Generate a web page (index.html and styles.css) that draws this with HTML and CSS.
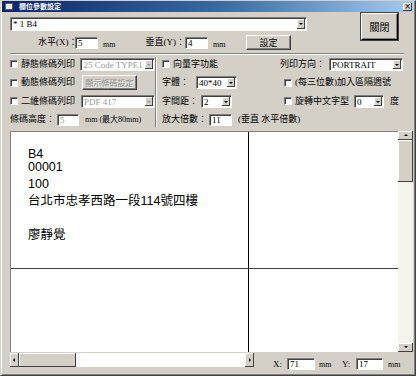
FILE: index.html
```html
<!DOCTYPE html>
<html lang="zh-Hant">
<head>
  <meta charset="UTF-8">
  <link rel="stylesheet" href="styles.css">
  <title>欄位參數設定</title>
</head>
<body>
  <div class="window">
    <!-- Title bar -->
    <div class="titlebar">
      <span class="title-icon"></span>
      <span class="title-text">欄位參數設定</span>
      <span class="title-close">×</span>
    </div>

    <!-- Field select + position -->
    <div class="top">
      <div class="top-left">
        <div class="combo combo-field"><span class="combo-text">* 1 B4</span><span class="combo-btn"></span></div>
        <div class="pos-row">
          <span class="lbl lbl-x">水平(X)：</span>
          <span class="field w23">5</span>
          <span class="unit">mm</span>
          <span class="lbl lbl-y">垂直(Y)：</span>
          <span class="field w23">4</span>
          <span class="unit">mm</span>
          <span class="btn btn-set">設定</span>
        </div>
      </div>
      <div class="btn btn-close">關閉</div>
    </div>

    <div class="sep"></div>

    <!-- Options -->
    <div class="options">
      <div class="opt-left">
        <div class="row">
          <span class="check-label"><span class="checkbox"></span>靜態條碼列印</span>
          <span class="combo combo-bar disabled"><span class="combo-text">25 Code TYPE1</span><span class="combo-btn"></span></span>
        </div>
        <div class="row">
          <span class="check-label"><span class="checkbox"></span>動態條碼列印</span>
          <span class="btn btn-bar disabled">顯示條碼設定</span>
        </div>
        <div class="row">
          <span class="check-label"><span class="checkbox"></span>二維條碼列印</span>
          <span class="combo combo-bar2 disabled"><span class="combo-text">PDF 417</span><span class="combo-btn"></span></span>
        </div>
        <div class="row">
          <span class="lbl lbl-height">條碼高度：</span>
          <span class="field w22 disabled">5</span>
          <span class="note">mm (最大80mm)</span>
        </div>
      </div>

      <div class="vsep"></div>

      <div class="opt-right">
        <div class="row">
          <span class="col-a"><span class="check-label"><span class="checkbox"></span>向量字功能</span></span>
          <span class="lbl lbl-dir">列印方向：</span>
          <span class="combo combo-dir"><span class="combo-text">PORTRAIT</span><span class="combo-btn"></span></span>
        </div>
        <div class="row">
          <span class="col-a">
            <span class="lbl lbl-font">字體：</span>
            <span class="combo combo-font"><span class="combo-text">40*40</span><span class="combo-btn"></span></span>
          </span>
          <span class="check-label col-b"><span class="checkbox"></span>(每三位數)加入區隔週號</span>
        </div>
        <div class="row">
          <span class="col-a">
            <span class="lbl lbl-space">字間距：</span>
            <span class="combo combo-space"><span class="combo-text">2</span><span class="combo-btn"></span></span>
          </span>
          <span class="check-label col-b lbl-rot"><span class="checkbox"></span>旋轉中文字型</span>
          <span class="combo combo-rot"><span class="combo-text">0</span><span class="combo-btn"></span></span>
          <span class="deg">度</span>
        </div>
        <div class="row">
          <span class="lbl lbl-zoom">放大倍數：</span>
          <span class="field w23">11</span>
          <span class="note">(垂直 水平倍數)</span>
        </div>
      </div>
    </div>

    <!-- Preview -->
    <div class="preview">
      <div class="paper-wrap">
        <div class="paper">
          <div class="cell cell-a">
            <div class="line line-first">B4</div>
            <div class="line">00001</div>
            <div class="line">100</div>
            <div class="line">台北市忠孝西路一段114號四樓</div>
            <div class="line">&nbsp;</div>
            <div class="line">廖靜覺</div>
          </div>
          <div class="cell cell-b"></div>
          <div class="cell cell-c"></div>
          <div class="cell cell-d"></div>
        </div>
        <div class="vscroll">
          <span class="sb-btn sb-up"></span>
          <span class="sb-thumb-v"></span>
          <span class="sb-track"></span>
          <span class="sb-btn sb-down"></span>
        </div>
      </div>
      <div class="bottom">
        <div class="hscroll">
          <span class="sb-btn sb-left"></span>
          <span class="sb-thumb-h"></span>
          <span class="sb-track"></span>
          <span class="sb-btn sb-right"></span>
        </div>
        <div class="coords">
          <span class="lbl lbl-cx">X:</span>
          <span class="field w28">71</span>
          <span class="unit unit-cx">mm</span>
          <span class="lbl lbl-cy">Y:</span>
          <span class="field w27">17</span>
          <span class="unit unit-cy">mm</span>
        </div>
      </div>
    </div>
  </div>
</body>
</html>
```

FILE: styles.css
```css
body {
  margin: 0;
  padding: 0;
  background: #d4d0c8;
  font-family: "Liberation Serif", "Noto Sans CJK TC", serif;
  font-size: 9px;
  color: #000;
}

.window {
  width: 416px;
  height: 376px;
  box-sizing: border-box;
  border: 1px solid;
  border-color: #d4d0c8 #404040 #404040 #d4d0c8;
  box-shadow: inset 1px 0 #fff, inset -1px -1px #808080;
  padding: 0 2px 2px 1px;
  background: #d4d0c8;
  overflow: hidden;
}

/* Title bar */
.titlebar {
  height: 11px;
  display: flex;
  align-items: center;
  background: linear-gradient(to right, #0a246a, #3a6ea5 55%, #a6caf0);
  color: #fff;
}

.title-icon {
  width: 6px;
  height: 5px;
  margin-left: 3px;
  background: #e8e8e8;
  border: 1px solid #606060;
}

.title-text {
  margin-left: 6px;
  font-family: "Noto Sans CJK TC", sans-serif;
  font-size: 7px;
  font-weight: bold;
  line-height: 11px;
}

.title-close {
  margin-left: auto;
  margin-right: 1px;
  width: 9px;
  height: 8px;
  background: #d4d0c8;
  color: #000;
  font-family: "DejaVu Sans", sans-serif;
  font-size: 8px;
  line-height: 8px;
  text-align: center;
  box-shadow: inset -1px -1px #404040, inset 1px 1px #fff;
}

/* Common controls */
.lbl, .unit, .note, .deg {
  white-space: nowrap;
  line-height: 13px;
}

.field {
  height: 12px;
  box-sizing: border-box;
  background: #fff;
  border: 1px solid;
  border-color: #808080 #fff #fff #808080;
  box-shadow: inset 1px 1px #404040;
  padding-left: 2px;
  line-height: 10px;
  font-size: 9px;
}

.field.disabled {
  color: #9a9a9a;
}

.w22 { width: 22px; }
.w23 { width: 23px; }
.w27 { width: 27px; }
.w28 { width: 28px; }

.combo {
  display: flex;
  height: 13px;
  box-sizing: border-box;
  background: #fff;
  border: 1px solid;
  border-color: #808080 #fff #fff #808080;
  box-shadow: inset 1px 1px #404040;
  padding: 1px 1px 1px 2px;
}

.combo-text {
  flex: 1;
  line-height: 10px;
  white-space: nowrap;
  overflow: hidden;
}

.combo-btn {
  width: 8px;
  background: #d4d0c8;
  box-shadow: inset -1px -1px #404040, inset 1px 1px #fff;
  position: relative;
}

.combo-btn::after {
  content: "";
  position: absolute;
  left: 2px;
  top: 4px;
  border-style: solid;
  border-width: 2px 2px 0 2px;
  border-color: #000 transparent transparent transparent;
}

.combo.disabled .combo-text {
  color: #9a9a9a;
}

.combo.disabled .combo-btn::after {
  border-top-color: #9a9a9a;
}

.btn {
  box-sizing: border-box;
  background: #d4d0c8;
  border: 1px solid;
  border-color: #fff #404040 #404040 #fff;
  box-shadow: inset -1px -1px #808080;
  font-family: "Noto Sans CJK TC", sans-serif;
  text-align: center;
}

.btn.disabled {
  color: #8a8a8a;
  text-shadow: 1px 1px #fff;
}

.checkbox {
  display: inline-block;
  width: 8px;
  height: 8px;
  box-sizing: border-box;
  background: #fff;
  border: 1px solid;
  border-color: #808080 #fff #fff #808080;
  box-shadow: inset 1px 1px #404040;
  margin-right: 3px;
  vertical-align: -1px;
}

.check-label {
  display: flex;
  align-items: center;
  white-space: nowrap;
  line-height: 13px;
}

/* Top part */
.top {
  display: flex;
  padding-left: 8px;
}

.top-left {
  width: 297px;
}

.combo-field {
  margin-top: 5px;
  height: 14px;
}

.pos-row {
  display: flex;
  align-items: center;
  height: 15px;
  margin-top: 4px;
}

.lbl-x {
  width: 37px;
  margin-left: 28px;
  text-align: right;
}

.lbl-y {
  width: 41px;
  margin-left: 24px;
  text-align: right;
}

.unit {
  width: 17px;
  margin-left: 5px;
  font-size: 8px;
  padding-top: 3px;
}

.btn-set {
  width: 45px;
  height: 15px;
  margin-left: 16px;
  font-size: 9px;
  line-height: 13px;
}

.btn-close {
  width: 37px;
  height: 27px;
  margin-top: 1px;
  margin-left: 54px;
  font-size: 10px;
  line-height: 25px;
  border-color: #fff #000 #000 #fff;
  outline: 1px solid #404040;
}

.sep {
  height: 0;
  margin: 3px 9px 0 8px;
  border-top: 1px solid #808080;
  border-bottom: 1px solid #fff;
}

/* Options */
.options {
  display: flex;
  height: 70px;
  margin-top: 2px;
}

.opt-left {
  width: 153px;
  padding-left: 8px;
  box-sizing: border-box;
  display: flex;
  flex-direction: column;
  gap: 4.5px;
}

.row {
  display: flex;
  align-items: center;
  height: 14px;
}

.opt-left .check-label {
  width: 72px;
}

.combo-bar { width: 76px; }
.combo-bar2 { width: 75px; }

.btn-bar {
  width: 55px;
  height: 15px;
  font-size: 8px;
  line-height: 13px;
}

.lbl-height {
  width: 47px;
}

.opt-left .note {
  margin-left: 6px;
  font-size: 8px;
}

.vsep {
  width: 0;
  border-left: 1px solid #808080;
  border-right: 1px solid #fff;
  margin-top: 0;
}

.opt-right {
  flex: 1;
  margin-left: 5px;
  display: flex;
  flex-direction: column;
  gap: 4.5px;
}

.col-a {
  display: flex;
  align-items: center;
  width: 117px;
}

.lbl-dir { width: 49px; margin-left: 1px; }
.combo-dir { width: 74px; }

.lbl-font { width: 34px; }
.combo-font { width: 41px; }

.lbl-space { width: 39px; }
.combo-space { width: 31px; }

.col-b { margin-left: 5px; }
.lbl-rot { width: 70px; }
.combo-rot { width: 30px; }

.deg { margin-left: 6px; }

.lbl-zoom { width: 47px; }

.opt-right .note {
  margin-left: 6px;
}

/* Preview */
.preview {
  margin-top: 4px;
  margin-left: 8px;
}

.paper-wrap {
  display: flex;
  height: 221px;
}

.paper {
  flex: 1;
  display: grid;
  grid-template-columns: 238px 1fr;
  grid-template-rows: 137px 1fr;
  background: #fff;
  border-top: 1px solid #808080;
  border-left: 1px solid #808080;
}

.cell-a, .cell-c {
  border-right: 1px solid #000;
}

.cell-a, .cell-b {
  border-bottom: 1px solid #404040;
}

.cell-a {
  padding: 14px 0 0 17px;
  font-family: "Liberation Sans", "Noto Sans CJK TC", sans-serif;
  font-size: 12.5px;
}

.line {
  line-height: 17px;
  height: 17px;
  white-space: nowrap;
}

.line-first {
  margin-bottom: -4px;
}

.vscroll {
  width: 15px;
  display: flex;
  flex-direction: column;
  background: #f4f3ee;
}

.sb-btn {
  background: #d4d0c8;
  box-shadow: inset -1px -1px #404040, inset 1px 1px #fff;
  position: relative;
  flex: none;
}

.vscroll .sb-btn {
  height: 9px;
}

.sb-thumb-v {
  height: 42px;
  background: #d4d0c8;
  box-shadow: inset -1px -1px #404040, inset 1px 1px #fff;
}

.sb-track {
  flex: 1;
  background: #f4f3ee;
}

.sb-btn::after {
  content: "";
  position: absolute;
  border-style: solid;
}

.sb-up::after {
  left: 6px;
  top: 3px;
  border-width: 0 2px 2px 2px;
  border-color: transparent transparent #000 transparent;
}

.sb-down::after {
  left: 6px;
  top: 3px;
  border-width: 2px 2px 0 2px;
  border-color: #000 transparent transparent transparent;
}

.bottom {
  display: flex;
}

.hscroll {
  display: flex;
  width: 244px;
  height: 14px;
  margin-top: 1px;
  background: #fff;
}

.hscroll .sb-btn {
  width: 9px;
}

.sb-thumb-h {
  width: 57px;
  background: #d4d0c8;
  box-shadow: inset -1px -1px #404040, inset 1px 1px #fff;
}

.hscroll .sb-track {
  background: #fff;
}

.sb-left::after {
  left: 3px;
  top: 5px;
  border-width: 2px 2px 2px 0;
  border-color: transparent #000 transparent transparent;
}

.sb-right::after {
  left: 4px;
  top: 5px;
  border-width: 2px 0 2px 2px;
  border-color: transparent transparent transparent #000;
}

.coords {
  display: flex;
  align-items: center;
  height: 12px;
  margin-top: 6px;
  margin-left: 19px;
}

.lbl-cx, .lbl-cy {
  width: 14px;
}

.lbl-cy {
  margin-left: 3px;
}

.unit-cx {
  width: 20px;
  margin-left: 4px;
  padding-top: 0;
}

.unit-cy {
  margin-left: 5px;
  padding-top: 0;
}
```
